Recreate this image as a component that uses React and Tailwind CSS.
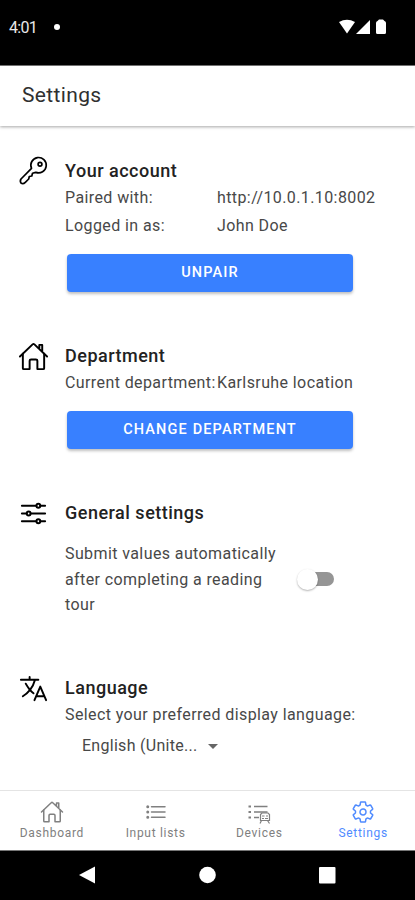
import { IoHomeOutline, IoOptionsOutline, IoLanguageOutline, IoListOutline, IoSettingsOutline } from 'react-icons/io5';

function StatusBar() {
  return (
    <div className="h-[66px] bg-black flex items-start justify-between pl-[9px] pr-[28px] pt-[18px] border-b border-[#777]">
      <div className="flex items-center h-5 text-[#e8e8e8]">
        <span className="text-[16px] tracking-[-0.700px]">4:01</span>
        <span className="ml-[17px] -mt-[3px] w-[6px] h-[6px] rounded-full bg-white" />
      </div>
      <svg width="48" height="16" viewBox="0 0 48 16" fill="white" className="mt-px">
        <path d="M0 3 Q8 -1.600 16 3 L8 14.500 Z" />
        <path d="M17 15 L31 1 V15 Z" />
        <path d="M37 4 Q37 2.500 38.500 2 L40 0.500 H44 L45.500 2 Q47 2.500 47 4 V13.500 Q47 15 45.500 15 H38.500 Q37 15 37 13.500 Z" />
      </svg>
    </div>
  );
}

function KeyIcon({ size, className }) {
  return (
    <svg width={size} height={size} viewBox="0 0 31 31" fill="none" stroke="currentColor" strokeWidth="1.700" strokeLinejoin="round" className={className}>
      <path d="M13.500 12.300A7.700 7.700 0 1 1 17.800 16.400L14.500 17.300L13.800 20L11.300 20.500L10.700 23L7.300 26.300Q5.300 28.200 3.200 27.200Q1.600 25.200 3 23Z" />
      <circle cx="22" cy="8.200" r="1.900" />
    </svg>
  );
}

function Section({ icon: Icon, title, className, children }) {
  return (
    <section className={`flex pl-[18px] ${className || ''}`}>
      <Icon size={31} className="shrink-0 text-black" />
      <div className="ml-4 w-[320px] pt-px">
        <h2 className="h-7 leading-7 text-[18px] font-medium tracking-[0.5px] text-[#222]">{title}</h2>
        {children}
      </div>
    </section>
  );
}

function Row({ label, value }) {
  return (
    <div className="flex h-7 leading-[26px]">
      <span className="w-[152px] whitespace-nowrap">{label}</span>
      <span className="whitespace-nowrap">{value}</span>
    </div>
  );
}

function Button({ children }) {
  return (
    <button className="block mt-[13px] ml-[2px] w-[286px] h-[38px] rounded-[4px] bg-[#3880ff] text-white text-[14.5px] font-medium tracking-[1.150px] shadow-[0_2px_3px_rgba(0,0,0,0.25)]">
      {children}
    </button>
  );
}

function DevicesIcon() {
  return (
    <svg width="24" height="24" viewBox="0 0 24 24" fill="none" stroke="currentColor" strokeWidth="1.500">
      <path d="M7 6.500H20.500M7 12H20.500M7 17.500H12" />
      <path d="M1.500 6.500H4M1.500 12H4M1.500 17.500H4" strokeWidth="2.200" />
      <path d="M13.500 14.500L15 13H21L22.500 14.500V20.500H13.500ZM14.500 20.500L13 23.500M20.500 20.500L22.500 23.500M15 16H17.500M19 16H21M15 18.500H17M18 18.500H21" strokeWidth="1.200" />
    </svg>
  );
}

const tabs = [
  { label: 'Dashboard', icon: IoHomeOutline },
  { label: 'Input lists', icon: IoListOutline },
  { label: 'Devices', icon: DevicesIcon },
  { label: 'Settings', icon: IoSettingsOutline, active: true },
];

export default function App() {
  return (
    <div className="w-[415px] h-[900px] flex flex-col overflow-hidden bg-white font-['Roboto',sans-serif] text-[16px] tracking-[0.400px] text-[#484848]">
      <StatusBar />
      <header className="h-[60px] shrink-0 flex items-center pl-[22px] text-[21px] tracking-[0.350px] text-[#303030] shadow-[0_1px_3px_rgba(0,0,0,0.35)]">
        Settings
      </header>

      <main className="flex-1 min-h-0">
        <Section icon={KeyIcon} title="Your account" className="pt-[30px] h-[215px]">
          <Row label="Paired with:" value="http://10.0.1.10:8002" />
          <Row label="Logged in as:" value="John Doe" />
          <Button>UNPAIR</Button>
        </Section>

        <Section icon={IoHomeOutline} title="Department" className="h-[157px]">
          <Row label="Current department:" value="Karlsruhe location" />
          <Button>CHANGE DEPARTMENT</Button>
        </Section>

        <Section icon={IoOptionsOutline} title="General settings" className="h-[175px]">
          <div className="flex items-center mt-[14px]">
            <p className="w-[232px] leading-[25.500px]">
              Submit values automatically<br />after completing a reading<br />tour
            </p>
            <div className="flex items-center w-[38px] h-[22px]">
              <span className="w-[21px] h-[21px] rounded-full bg-white z-10 shadow-[0_1px_2px_rgba(0,0,0,0.3)]" />
              <span className="-ml-[13px] w-[29px] h-[14px] rounded-full bg-[#959595]" />
            </div>
          </div>
        </Section>

        <Section icon={IoLanguageOutline} title="Language">
          <p className="h-7 leading-[26px] whitespace-nowrap">Select your preferred display language:</p>
          <div className="flex items-center h-8 pl-[17px]">
            <span className="tracking-[0.280px]">English (Unite...</span>
            <span className="ml-[11px] border-x-[5px] border-t-[5px] border-x-transparent border-t-[#666]" />
          </div>
        </Section>
      </main>

      <nav className="h-[60px] shrink-0 grid grid-cols-4 border-t border-[#e4e4e4]">
        {tabs.map(({ label, icon: Icon, active }) => (
          <div key={label} className={`flex flex-col items-center pt-[9px] ${active ? 'text-[#4f8bff]' : 'text-[#808080]'}`}>
            <Icon size={24} />
            <span className="text-[12px] leading-[18px] tracking-[0.700px]">{label}</span>
          </div>
        ))}
      </nav>

      <div className="h-[50px] shrink-0 bg-black border-t border-[#777] flex items-center pl-[79px]">
        <svg width="257" height="18" viewBox="0 0 257 18" fill="white" className="-mt-px">
          <path d="M0 9 L16 0.500 V17.500 Z" />
          <circle cx="128.500" cy="9" r="8.300" />
          <rect x="240" y="1" width="16.500" height="16.500" rx="1" />
        </svg>
      </div>
    </div>
  );
}
